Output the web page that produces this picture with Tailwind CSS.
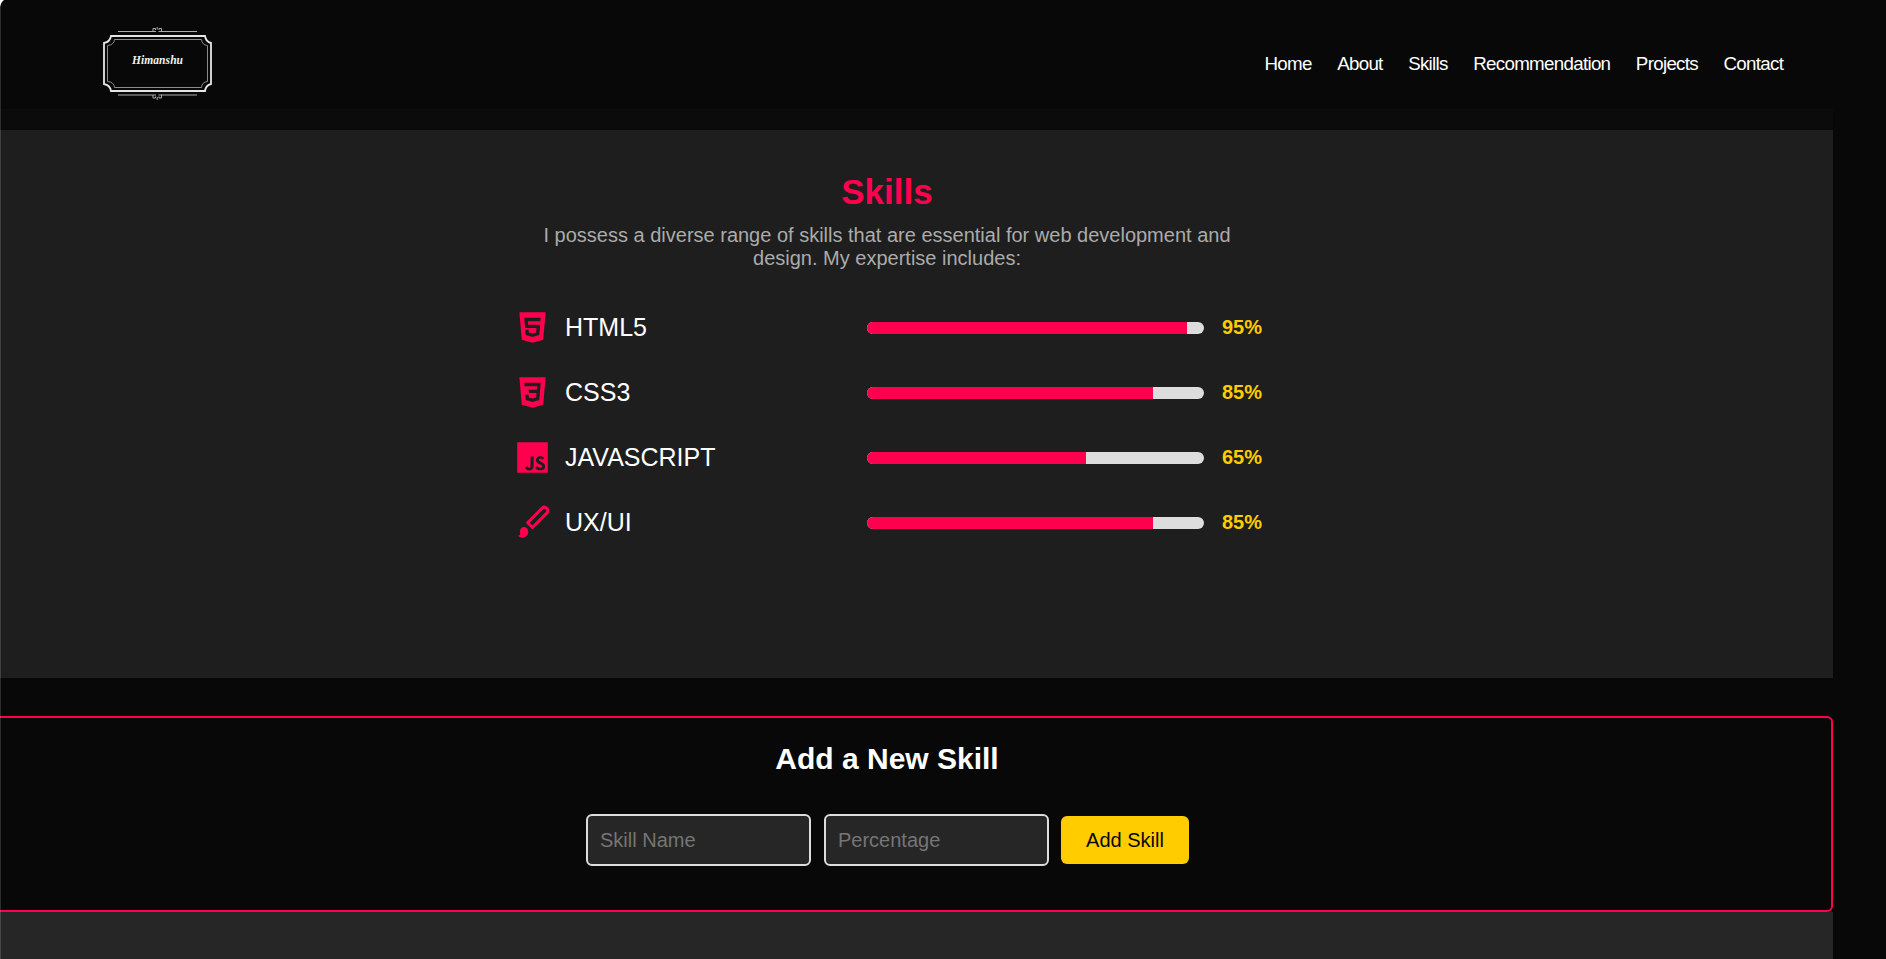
<!DOCTYPE html>
<html lang="en">
<head>
<meta charset="utf-8">
<title>Himanshu</title>
<script src="https://cdn.jsdelivr.net/npm/@tailwindcss/browser@4"></script>
</head>
<body class="bg-[#080808] h-[959px] overflow-hidden font-['Liberation_Sans',Arial,sans-serif] text-white">
<div class="relative h-[959px] flex flex-col overflow-hidden">
  <header class="h-[109px] shrink-0 flex justify-between pl-[103px] pr-[102.8px]">
    <svg class="mt-[26px]" width="110" height="76" viewBox="103 26 110 76" fill="none">
      <path d="M111 36H205Q206 42 211 43V84Q206 85 205 91H111Q110 85 104 84V43Q110 42 111 36Z" stroke="#e6e6e6" stroke-width="1.8"/>
      <path d="M114.500 39.500H201.500Q202 45 207.500 45.500V81.500Q202 82 201.500 87.500H114.500Q114 82 107.500 81.500V45.500Q114 45 114.500 39.500Z" stroke="#8b8b8b" stroke-width="1"/>
      <path d="M118 31.500H153M161 31.500H197M118 95H153M161 95H197" stroke="#aaa" stroke-width="1"/>
      <path d="M156 31.500H153V28.500H155.500V30M158.500 31.500H161.500V28.500H159V30M157.200 27V29.500M156 95H153V98H155.500V96.500M158.500 95H161.500V98H159V96.500M157.200 97V100" stroke="#aaa" stroke-width="1"/>
      <text x="157.500" y="64" text-anchor="middle" fill="#f2f2f2" font-family="Liberation Serif, serif" font-size="11.500" font-weight="bold" font-style="italic" textLength="51">Himanshu</text>
    </svg>
    <nav class="flex gap-[25.5px] pt-[53px] text-[18.75px] leading-[22px] tracking-[-0.7px]">
      <a>Home</a><a>About</a><a>Skills</a><a>Recommendation</a><a>Projects</a><a>Contact</a>
    </nav>
  </header>
  <main class="w-[1833px] flex flex-col grow">
    <div class="h-[21px] shrink-0 bg-[#0b0b0b]"></div>
    <section class="h-[548px] shrink-0 bg-[#1e1e1e] pt-[42px]">
      <div class="w-[740px] ml-[517px] flex flex-col">
        <h2 class="text-center text-[35px] leading-10 font-bold text-[#ff004f]">Skills</h2>
        <p class="text-center text-xl leading-[23px] text-[#ababab] mt-3">I possess a diverse range of skills that are essential for web development and<br>design. My expertise includes:</p>
        <div class="mt-10 flex flex-col gap-[30px]">
          <div class="h-[35px] flex items-center">
            <svg class="-ml-[2px] shrink-0" width="35" height="35" viewBox="0 0 512 512" fill="#ff004f"><path d="M64 32l34.940 403.210L255.770 480 413 435.150 448 32zm308 132H188l4 51h176l-13.510 151.390L256 394.480l-98.680-28-6.780-77.480h48.260l3.420 39.290L256 343.070l53.420-14.920L315 264H148l-12.590-149.590H376.200z"/></svg>
            <span class="w-[302px] ml-[15px] pb-0.5 shrink-0 text-[25px] leading-7">HTML5</span>
            <div class="w-[337px] shrink-0 h-3 rounded-full overflow-hidden bg-[#ddd]"><div class="h-full bg-[#ff004f]" style="width:95%"></div></div>
            <span class="ml-[18px] text-xl leading-[23px] font-bold text-[#ffcc00]">95%</span>
          </div>
          <div class="h-[35px] flex items-center">
            <svg class="-ml-[2px] shrink-0" width="35" height="35" viewBox="0 0 512 512" fill="#ff004f"><path d="M64 32l35 403.220L255.770 480 413 435.150 448 32zm290.680 334.900L256.070 395l-98.460-28.240-6.750-77.760h48.260l3.430 39.560 53.590 15.160.13.280 53.470-14.850 5.640-64.150H203l-4-50h120.650l4.350-51H140l-4-49h240.580z"/></svg>
            <span class="w-[302px] ml-[15px] pb-0.5 shrink-0 text-[25px] leading-7">CSS3</span>
            <div class="w-[337px] shrink-0 h-3 rounded-full overflow-hidden bg-[#ddd]"><div class="h-full bg-[#ff004f]" style="width:85%"></div></div>
            <span class="ml-[18px] text-xl leading-[23px] font-bold text-[#ffcc00]">85%</span>
          </div>
          <div class="h-[35px] flex items-center">
            <svg class="-ml-[2px] shrink-0" width="35" height="35" viewBox="0 0 512 512" fill="#ff004f"><path d="M32 32v448h448V32zm240 348c0 43.610-25.760 64.870-63.050 64.870-33.680 0-53.230-17.440-63.150-38.490l34.280-20.750c6.610 11.730 11.630 21.650 26.060 21.650 12 0 21.860-5.410 21.860-26.460V240h44zm99.350 63.870c-39.090 0-64.350-17.640-76.680-42L329 382c9 14.740 20.750 24.560 41.500 24.560 17.440 0 27.570-7.720 27.570-19.750 0-14.430-10.430-19.540-29.680-28l-10.520-4.520c-30.380-12.920-50.520-29.160-50.520-63.450 0-31.570 24.050-54.850 61.650-54.850 26.770 0 46 8.320 59.850 32.680L396 290c-7.220-12.930-15-18-27.060-18-12.330 0-20.150 7.820-20.150 18 0 12.630 7.820 17.740 25.860 25.560l10.520 4.510c35.790 15.340 55.940 31 55.940 66.160.01 37.900-29.760 57.640-69.760 57.640z"/></svg>
            <span class="w-[302px] ml-[15px] pb-0.5 shrink-0 text-[25px] leading-7">JAVASCRIPT</span>
            <div class="w-[337px] shrink-0 h-3 rounded-full overflow-hidden bg-[#ddd]"><div class="h-full bg-[#ff004f]" style="width:65%"></div></div>
            <span class="ml-[18px] text-xl leading-[23px] font-bold text-[#ffcc00]">65%</span>
          </div>
          <div class="h-[35px] flex items-center">
            <svg class="-ml-[2px] shrink-0" width="35" height="35" viewBox="0 0 35 35"><path d="M12.700 17.700L27.100 3.100a3.400 3.400 0 0 1 4.800 4.800L17.500 22.500z" fill="none" stroke="#ff004f" stroke-width="3" stroke-linejoin="round"/><path d="M8.800 21.900a4.600 4.600 0 0 1 4.500 4.700c0 3.400-2.400 6.100-5.800 6.100-1.800 0-3.500-.8-4.500-2.100 1.300.1 2.200-.5 2.200-1.700-.9-3.500.7-7 3.600-7z" fill="#ff004f"/></svg>
            <span class="w-[302px] ml-[15px] pb-0.5 shrink-0 text-[25px] leading-7">UX/UI</span>
            <div class="w-[337px] shrink-0 h-3 rounded-full overflow-hidden bg-[#ddd]"><div class="h-full bg-[#ff004f]" style="width:85%"></div></div>
            <span class="ml-[18px] text-xl leading-[23px] font-bold text-[#ffcc00]">85%</span>
          </div>
        </div>
      </div>
    </section>
    <section class="mt-[38px] h-[196px] shrink-0 border-2 border-l-0 border-[#ff004f] rounded-r-md bg-[#080808] pt-[24px]">
      <div class="w-[740px] ml-[517px]">
        <h3 class="text-center text-[30px] leading-[34px] font-bold">Add a New Skill</h3>
        <form class="mt-[38px] ml-[69px] flex items-center">
          <input class="w-[225px] h-[52px] border-2 border-[#ddd] rounded-md bg-[#262626] px-3 text-xl placeholder:text-[#757575]" placeholder="Skill Name">
          <input class="ml-[13px] w-[225px] h-[52px] border-2 border-[#ddd] rounded-md bg-[#262626] px-3 text-xl placeholder:text-[#757575]" placeholder="Percentage">
          <button type="button" class="ml-3 w-32 h-12 rounded-md bg-[#ffcc00] text-xl text-[#080808]">Add Skill</button>
        </form>
      </div>
    </section>
    <footer class="grow bg-[#262626]"></footer>
  </main>
  <div class="absolute left-0 top-0 w-px h-full bg-white/15"></div>
  <svg class="absolute left-0 top-0" width="5" height="8"><path d="M0 0H4Q1 2 0 7Z" fill="#fff"/></svg>
</div>
</body>
</html>
